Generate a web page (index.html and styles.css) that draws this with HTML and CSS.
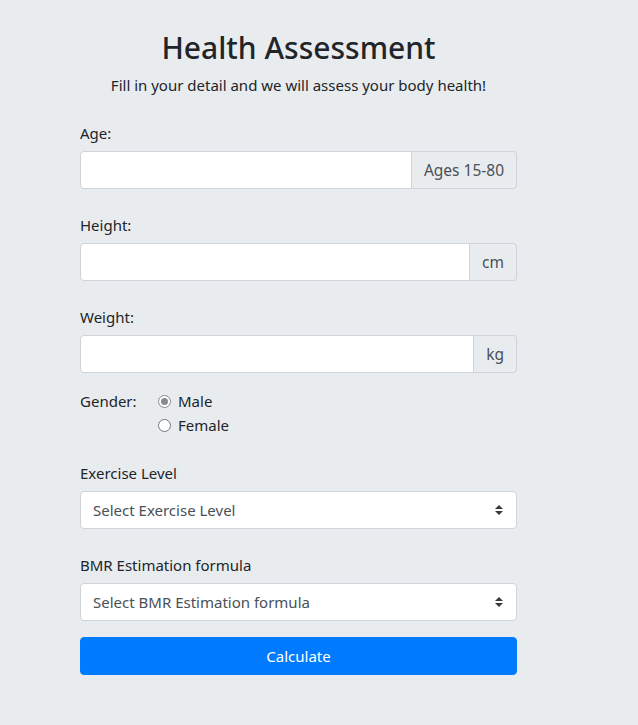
FILE: index.html
```html
<!DOCTYPE html>
<html lang="en">
<head>
<meta charset="utf-8">
<title>Health Assessment</title>
<link rel="stylesheet" href="styles.css">
</head>
<body>
<main class="page">
  <form class="form">
    <h1 class="title">Health Assessment</h1>
    <p class="subtitle">Fill in your detail and we will assess your body health!</p>

    <div class="group">
      <label class="label">Age:</label>
      <div class="input-group">
        <input class="control" type="text">
        <span class="addon">Ages 15-80</span>
      </div>
    </div>

    <div class="group">
      <label class="label">Height:</label>
      <div class="input-group">
        <input class="control" type="text">
        <span class="addon">cm</span>
      </div>
    </div>

    <div class="group">
      <label class="label">Weight:</label>
      <div class="input-group">
        <input class="control" type="text">
        <span class="addon">kg</span>
      </div>
    </div>

    <div class="gender">
      <span class="gender-label">Gender:</span>
      <div class="radios">
        <label class="radio"><span class="dot checked"></span>Male</label>
        <label class="radio"><span class="dot"></span>Female</label>
      </div>
    </div>

    <div class="group">
      <label class="label">Exercise Level</label>
      <div class="select-wrap">
        <select class="select"><option>Select Exercise Level</option></select>
        <svg class="arrow" width="8" height="10" viewBox="0 0 8 10"><path d="M4 0 L8 4 L0 4 Z M0 6 L8 6 L4 10 Z" fill="#343a40"/></svg>
      </div>
    </div>

    <div class="group last">
      <label class="label">BMR Estimation formula</label>
      <div class="select-wrap">
        <select class="select"><option>Select BMR Estimation formula</option></select>
        <svg class="arrow" width="8" height="10" viewBox="0 0 8 10"><path d="M4 0 L8 4 L0 4 Z M0 6 L8 6 L4 10 Z" fill="#343a40"/></svg>
      </div>
    </div>

    <button class="btn" type="button">Calculate</button>
  </form>
</main>
</body>
</html>
```
FILE: styles.css
```css
html, body {
  margin: 0;
  padding: 0;
  background: #e9ecef;
}
body {
  font-family: "Noto Sans", "Open Sans", sans-serif;
  font-size: 15px;
  color: #212529;
  line-height: 24px;
  height: 725px;
}
.page {
  padding: 27px 0 0 80px;
}
.form {
  width: 437px;
  display: flex;
  flex-direction: column;
}
.title {
  margin: 0;
  text-align: center;
  font-size: 30px;
  font-weight: 500;
  line-height: 42px;
}
.subtitle {
  margin: 4px 0 0;
  text-align: center;
  font-size: 15px;
  line-height: 24px;
}
.group {
  display: flex;
  flex-direction: column;
  margin-top: 24px;
}
.label {
  line-height: 24px;
  margin-bottom: 6px;
}
.input-group {
  display: flex;
  height: 38px;
}
.control {
  flex: 1;
  min-width: 0;
  box-sizing: border-box;
  height: 38px;
  margin: 0;
  border: 1px solid #ced4da;
  border-radius: 4px 0 0 4px;
  background: #fff;
  font: inherit;
  padding: 0 12px;
}
.addon {
  box-sizing: border-box;
  height: 38px;
  display: flex;
  align-items: center;
  padding: 0 12px;
  background: #e9ecef;
  color: #495057;
  border: 1px solid #ced4da;
  border-left: none;
  border-radius: 0 4px 4px 0;
  white-space: nowrap;
  font-size: 15.5px;
}
.gender {
  display: flex;
  margin-top: 16px;
}
.gender-label {
  width: 78px;
}
.radios {
  display: flex;
  flex-direction: column;
}
.radio {
  display: flex;
  align-items: center;
  line-height: 24px;
}
.dot {
  box-sizing: border-box;
  width: 13px;
  height: 13px;
  border: 1px solid #767676;
  border-radius: 50%;
  background: #fff;
  margin-right: 7px;
  position: relative;
}
.dot.checked {
  border-color: #8a8a8a;
}
.dot.checked::after {
  content: "";
  position: absolute;
  left: 2px;
  top: 2px;
  width: 7px;
  height: 7px;
  border-radius: 50%;
  background: #8a8a8a;
}
.select-wrap {
  position: relative;
  height: 38px;
}
.select {
  -webkit-appearance: none;
  appearance: none;
  box-sizing: border-box;
  width: 100%;
  height: 38px;
  margin: 0;
  padding: 0 12px;
  border: 1px solid #ced4da;
  border-radius: 4px;
  background: #fff;
  color: #495057;
  font: inherit;
}
.arrow {
  position: absolute;
  right: 14px;
  top: 14px;
  pointer-events: none;
}
.btn {
  margin-top: 16px;
  height: 38px;
  border: 1px solid #007bff;
  border-radius: 4px;
  background: #007bff;
  color: #fff;
  font: inherit;
  cursor: pointer;
}
```
